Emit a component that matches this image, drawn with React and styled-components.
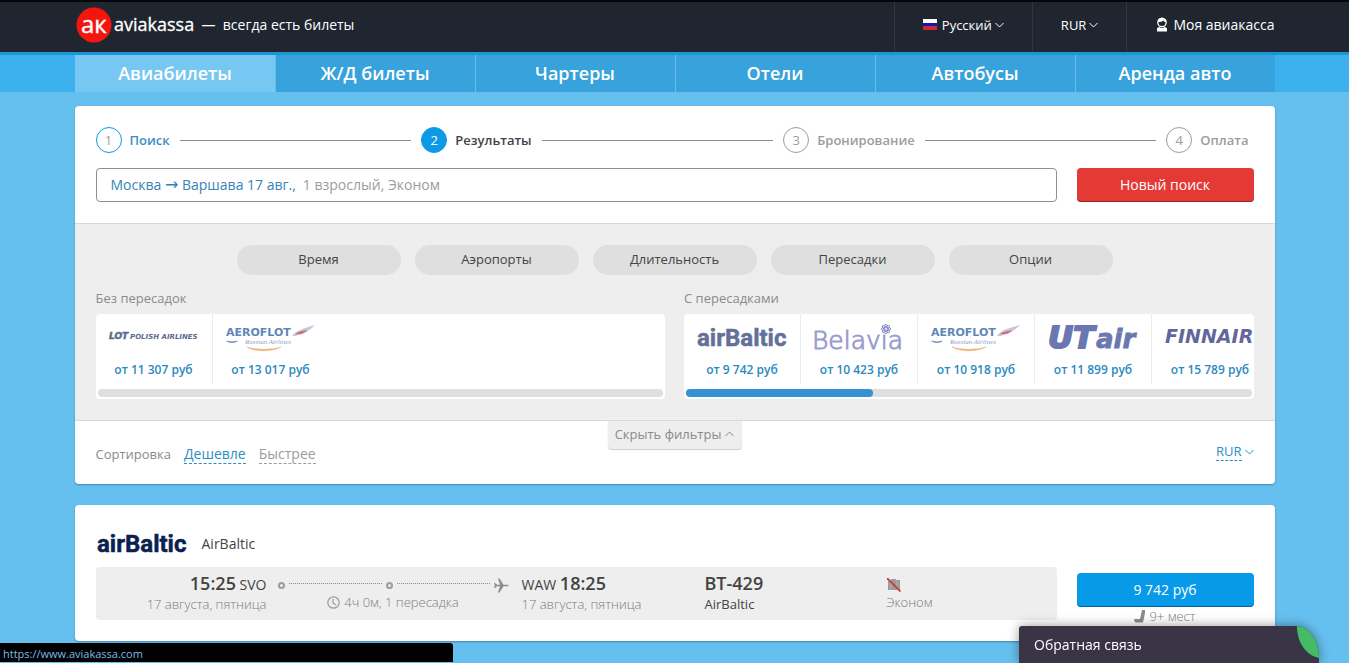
import { useState } from "react";
import styled, { createGlobalStyle } from "styled-components";

const GlobalStyle = createGlobalStyle`
  * {
    box-sizing: border-box;
  }

  body {
    margin: 0;
    background-color: #66c0ef;
    color: #434343;
    font-family: "Open Sans", "Noto Sans", sans-serif;
    font-size: 13px;
    line-height: 20px;
  }

  a {
    color: inherit;
    text-decoration: none;
  }

  button,
  select {
    margin: 0;
    padding: 0;
    border: none;
    background: none;
    color: inherit;
    font: inherit;
    cursor: pointer;
  }

  p,
  h2 {
    margin: 0;
  }

  svg {
    display: block;
    flex: none;
  }
`;

const Container = styled.div`
  display: flex;
  width: 100%;
  max-width: 1200px;
  margin: 0 auto;
`;

const TopBar = styled.header`
  border-top: 2px solid #06070d;
  border-bottom: 3px solid #1c96d5;
  background-color: #202630;
  color: #ffffff;
  font-size: 14px;
`;

const Brand = styled.a`
  display: flex;
  flex: 1;
  align-items: center;
  gap: 7px;
  height: 50px;
  padding-bottom: 4px;
`;

const HeaderCell = styled.div`
  display: flex;
  align-items: center;
  gap: 5px;
  height: 50px;
  padding: 0 28px 5px;
  border-left: 1px solid #303640;
`;

const AccountCell = styled(HeaderCell)`
  padding-right: 0;
  padding-left: 29px;
`;

const Picker = styled.label`
  display: flex;
  align-items: center;
  gap: 3px;
`;

const PlainSelect = styled.select`
  appearance: none;
  field-sizing: content;
  font-size: 13px;
  line-height: 20px;
`;

const Nav = styled.nav`
  background-color: #3db1ed;
`;

const NavTab = styled.a`
  flex: 1;
  height: 37px;
  border-left: 1px solid ${({ $active }) => ($active ? "#77c7f3" : "#68bfed")};
  background-color: ${({ $active }) => ($active ? "#77c7f3" : "#38a2dc")};
  color: #ffffff;
  font-size: 18px;
  font-weight: 600;
  line-height: 36px;
  text-align: center;
`;

const Main = styled.main`
  display: flex;
  flex-direction: column;
  gap: 21px;
  width: 100%;
  max-width: 1200px;
  margin: 0 auto;
  padding: 14px 0 20px;
`;

const Card = styled.section`
  border-radius: 4px;
  background-color: #ffffff;
  box-shadow: 0 1px 2px rgba(30, 80, 110, 0.5);
`;

const SearchHead = styled.div`
  display: flex;
  flex-direction: column;
  gap: 15px;
  padding: 21px;
  border-bottom: 1px solid #d9d9d9;
`;

const Steps = styled.div`
  display: flex;
  align-items: center;
  gap: 10px;
  padding-right: 5px;
`;

const STEP_COLORS = {
  done: "#3c8fc4",
  current: "#434343",
  next: "#9c9c9c",
};

const Step = styled.div`
  display: flex;
  align-items: center;
  gap: 8px;
  color: ${({ $state }) => STEP_COLORS[$state]};
  font-weight: 600;
`;

const StepNumber = styled.span`
  width: 26px;
  height: 26px;
  border: 1px solid
    ${({ $state }) => ($state === "next" ? "#9c9c9c" : "#0c9ae6")};
  border-radius: 50%;
  background-color: ${({ $state }) =>
    $state === "current" ? "#0c9ae6" : "#ffffff"};
  color: ${({ $state }) => ($state === "current" ? "#ffffff" : "#9c9c9c")};
  font-weight: 400;
  line-height: 24px;
  text-align: center;
`;

const StepLine = styled.span`
  flex: 1;
  height: 1px;
  background-color: #8c8c8c;
`;

const SideGrid = styled.div`
  display: grid;
  grid-template-columns: 1fr 177px;
  gap: 20px;
  align-items: start;
`;

const RouteField = styled.button`
  height: 34px;
  padding: 0 14px;
  border: 1px solid #8f8f8f;
  border-radius: 4px;
  color: #9c9c9c;
  font-size: 14px;
  text-align: left;
`;

const Route = styled.span`
  margin-right: 7px;
  color: #3584b5;
`;

const RouteArrow = styled.span`
  font-family: "DejaVu Sans", sans-serif;
  font-size: 16px;
  line-height: 16px;
`;

const SolidButton = styled.button`
  width: 100%;
  height: 34px;
  border-radius: 4px;
  background-color: ${({ $color }) => $color};
  box-shadow: inset 0 -1px 0 rgba(0, 0, 0, 0.35);
  color: #ffffff;
  font-size: 14px;
  font-weight: ${({ $weight }) => $weight || 400};
`;

const Filters = styled.div`
  display: flex;
  flex-direction: column;
  padding: 21px;
  border-bottom: 1px solid #d9d9d9;
  background-color: #eeeeee;
`;

const FilterPills = styled.div`
  display: flex;
  justify-content: center;
  gap: 14px;
`;

const Pill = styled.button`
  width: 164px;
  height: 30px;
  padding-bottom: 2px;
  border-radius: 15px;
  background-color: #dfdfdf;
  color: #444444;
  font-weight: 500;
`;

const AirlineGroups = styled.div`
  display: grid;
  grid-template-columns: minmax(0, 1fr) minmax(0, 1fr);
  gap: 19px;
  padding-top: 13px;
`;

const GroupTitle = styled.h2`
  padding-bottom: 6px;
  color: #8a8a8a;
  font-size: 13px;
  font-weight: 500;
  line-height: 20px;
`;

const AirlineBox = styled.div`
  overflow: hidden;
  border-radius: 4px;
  background-color: #ffffff;
`;

const AirlineRow = styled.div`
  display: flex;
  height: 70px;
  overflow: hidden;
`;

const AirlineCell = styled.a`
  display: flex;
  flex: none;
  flex-direction: column;
  align-items: center;
  width: 117px;
  border-right: 1px solid #ebebeb;
  color: #2a8ac0;
  font-size: 12px;
  font-weight: 600;
  line-height: 21px;

  &:last-child {
    border-right-color: transparent;
  }
`;

const Track = styled.div`
  height: 8px;
  margin: 5px 2px 2px;
  border-radius: 4px;
  background-color: #dfdfdf;
`;

const Thumb = styled.div`
  height: 8px;
  border-radius: 4px;
  background-color: #3792d4;
`;

const SortBar = styled.div`
  display: grid;
  grid-template-columns: 1fr 134px 1fr;
  min-height: 63px;
  padding: 0 21px;
`;

const SortOptions = styled.div`
  display: flex;
  align-items: center;
  gap: 13px;
  padding-top: 3px;
  color: #8a8a8a;
  font-weight: 500;
`;

const SortLink = styled.button`
  border-bottom: 1px dashed currentColor;
  color: ${({ $active }) => ($active ? "#2a8fc0" : "#9c9c9c")};
  font-size: 14px;
  font-weight: 400;
  line-height: 18px;
`;

const HideFilters = styled.button`
  display: flex;
  align-items: center;
  justify-content: center;
  gap: 4px;
  height: 28px;
  padding-bottom: 3px;
  border-radius: 0 0 4px 4px;
  background-color: #eeeeee;
  box-shadow: 0 1px 1px #cccccc;
  color: #8a8a8a;
  font-weight: 500;
`;

const CurrencyPicker = styled(Picker)`
  align-self: center;
  justify-self: end;
  padding-bottom: 2px;
  color: #2a8fc0;

  select {
    border-bottom: 1px dashed currentColor;
    line-height: 18px;
  }
`;

const TicketCard = styled(Card)`
  padding: 21px 21px 15px;
`;

const Carrier = styled.div`
  display: flex;
  align-items: center;
  gap: 14px;
  height: 41px;
  padding-bottom: 6px;
  font-size: 14px;
`;

const Segment = styled.div`
  display: grid;
  grid-template-columns: 171fr 255fr 183fr 182fr 170fr;
  height: 53px;
  padding: 6px 0;
  border-radius: 4px;
  background-color: #eeeeee;
`;

const SegmentPart = styled.div`
  text-align: ${({ $align }) => $align || "left"};
`;

const BigLine = styled.p`
  font-size: 14px;
  line-height: 20px;
  white-space: nowrap;

  strong {
    font-size: 18px;
    font-weight: 600;
  }
`;

const SmallLine = styled.p`
  display: flex;
  align-items: center;
  justify-content: ${({ $justify }) => $justify || "flex-start"};
  gap: 4px;
  color: ${({ $dark }) => ($dark ? "#434343" : "#7c7c7c")};
  font-weight: ${({ $dark }) => ($dark ? 400 : 300)};
  line-height: 19px;
  white-space: nowrap;
`;

const FlightPath = styled.div`
  padding: 0 13px 0 11px;
`;

const PathLine = styled.div`
  display: flex;
  align-items: center;
  gap: 4px;
  height: 20px;
  padding-top: 4px;
`;

const PathStop = styled.span`
  width: 7px;
  height: 7px;
  border: 2px solid #9c9c9c;
  border-radius: 50%;
`;

const PathDots = styled.span`
  flex: 1;
  height: 4px;
  border-top: 1px dotted #8c8c8c;
`;

const Offer = styled.div`
  padding-top: 6px;
`;

const StatusLine = styled.div`
  position: fixed;
  bottom: 1px;
  left: 0;
  width: 453px;
  max-width: 50%;
  height: 19px;
  padding-left: 3px;
  border-top-right-radius: 3px;
  background-color: #000000;
  color: #7cbbee;
  font-size: 11px;
  line-height: 22px;
`;

const Feedback = styled.button`
  position: fixed;
  right: 30px;
  bottom: 0;
  display: flex;
  justify-content: space-between;
  width: 300px;
  height: 37px;
  padding-left: 15px;
  overflow: hidden;
  border-radius: 3px 22px 0 0 / 3px 32px 0 0;
  background-color: #3a3447;
  box-shadow: 0 0 12px rgba(0, 0, 0, 0.4);
  color: #ffffff;
  font-size: 14px;
  line-height: 37px;
`;

const NAV_TABS = [
  "Авиабилеты",
  "Ж/Д билеты",
  "Чартеры",
  "Отели",
  "Автобусы",
  "Аренда авто",
];

const STEPS = [
  { title: "Поиск", state: "done" },
  { title: "Результаты", state: "current" },
  { title: "Бронирование", state: "next" },
  { title: "Оплата", state: "next" },
];

const FILTERS = ["Время", "Аэропорты", "Длительность", "Пересадки", "Опции"];

const Chevron = ({ up, color = "currentColor" }) => (
  <svg width="9" height="6" viewBox="0 0 9 6" fill="none" stroke={color}>
    <path d={up ? "M.5 5 4.5 1l4 4" : "M.5 1l4 4 4-4"} />
  </svg>
);

const Flag = () => (
  <svg width="14" height="11" viewBox="0 0 14 11">
    <path fill="#ffffff" d="M0 0h14v4H0z" />
    <path fill="#1713b4" d="M0 4h14v4H0z" />
    <path fill="#c92a34" d="M0 7h14v4H0z" />
  </svg>
);

const UserIcon = () => (
  <svg width="12" height="15" viewBox="0 0 12 15">
    <circle cx="6" cy="5.5" r="4.2" fill="none" stroke="#fff" strokeWidth="1.3" />
    <path d="M2 5c2 0 4.500-.4 5.500-1.600C8 4.500 9 5 10 5V2.500L6 .6 2.500 2z" fill="#fff" />
    <path d="M1 14.500v-2.500c0-1 1-1.800 2.400-2 1.500 1.200 3.700 1.200 5.200 0 1.400.2 2.400 1 2.400 2v2.500z" fill="#fff" />
  </svg>
);

const BrandLogo = () => (
  <svg width="120" height="36" viewBox="0 0 120 36" fill="#fff">
    <circle cx="19" cy="18" r="17.500" fill="#f5150f" />
    <text
      x="6"
      y="26"
      fontFamily="Open Sans"
      fontSize="24"
      fontWeight="500"
      stroke="#fff"
      strokeWidth=".4"
    >
      aк
    </text>
    <text
      x="39"
      y="24"
      fontFamily="Open Sans"
      fontSize="18"
      fontWeight="500"
      stroke="#fff"
      strokeWidth=".3"
    >
      aviakassa
    </text>
  </svg>
);

const AirBalticLogo = ({ color }) => (
  <svg width="92" height="28" viewBox="0 0 92 28">
    <text
      x="1"
      y="22"
      fill={color}
      stroke={color}
      strokeWidth=".5"
      fontFamily="Roboto"
      fontSize="24"
      fontWeight="700"
    >
      airBaltic
    </text>
  </svg>
);

const LotLogo = () => (
  <svg width="92" height="45" viewBox="0 0 92 45" fill="#5c6a90">
    <text
      x="1"
      y="25"
      fontFamily="DejaVu Sans"
      fontSize="9"
      fontWeight="700"
      fontStyle="italic"
      stroke="#5c6a90"
      strokeWidth=".5"
    >
      LOT
    </text>
    <text x="22" y="25" fontFamily="DejaVu Sans" fontSize="7" fontWeight="700" fontStyle="italic">
      POLISH AIRLINES
    </text>
  </svg>
);

const AeroflotLogo = () => (
  <svg width="92" height="45" viewBox="0 0 92 45">
    <text x="1" y="22" fill="#5f86b8" fontFamily="DejaVu Sans" fontSize="11" fontWeight="700">
      AEROFLOT
    </text>
    <text x="20" y="30" fill="#8ba3c6" fontFamily="Liberation Serif" fontSize="7" fontStyle="italic" fontWeight="400">
      Russian Airlines
    </text>
    <path d="M1 27c2-.6 4 .4 6 .4s4-1 6-.4c-2 1.500-4 2-6 2s-4-.5-6-2z" fill="#7f9cc4" />
    <path d="M67 22c4-6 13-8 23-11-5 5-10 9-17 10l-2 1z" fill="#c9c6d8" />
    <path d="M70 20c4-3 8-3 12-4-3 4-7 5-12 4z" fill="#cf6f7c" />
    <path d="M22 33c8 5 25 5 34 0-9 3-25 3-34 0z" fill="#ecb07a" stroke="#ecb07a" strokeWidth=".5" />
  </svg>
);

const PETALS = [0, 45, 90, 135, 180, 225, 270, 315];

const BelaviaLogo = () => (
  <svg width="94" height="45" viewBox="0 0 94 45">
    <text
      x="0"
      y="35"
      fill="#9c9dd0"
      stroke="#9c9dd0"
      strokeWidth="1"
      fontFamily="DejaVu Sans"
      fontSize="25"
      fontWeight="200"
    >
      Belavıa
    </text>
    <g fill="none" stroke="#8b8cc8" strokeWidth="1">
      <circle cx="74" cy="15" r="1.500" />
      {PETALS.map((angle) => (
        <circle
          key={angle}
          cx="74"
          cy="11.600"
          r="1.200"
          transform={`rotate(${angle} 74 15)`}
        />
      ))}
    </g>
  </svg>
);

const UtairLogo = () => (
  <svg width="92" height="45" viewBox="0 0 92 45">
    <g
      fill="#6b77b0"
      stroke="#6b77b0"
      fontFamily="DejaVu Sans"
      fontWeight="700"
      fontStyle="italic"
    >
      <text x="1" y="34" fontSize="31" strokeWidth="2">
        UT
      </text>
      <text x="49" y="34" fontSize="26" strokeWidth=".8">
        air
      </text>
    </g>
  </svg>
);

const FinnairLogo = () => (
  <svg width="92" height="45" viewBox="0 0 92 45">
    <text
      x="1"
      y="29"
      fill="#65659c"
      fontFamily="DejaVu Sans"
      fontSize="19"
      fontWeight="700"
      fontStyle="italic"
    >
      FINNAIR
    </text>
  </svg>
);

const AirBalticTile = () => (
  <svg width="92" height="45" viewBox="0 0 92 45">
    <svg y="10" width="92" height="28">
      <AirBalticLogo color="#64709a" />
    </svg>
  </svg>
);

const ClockIcon = () => (
  <svg width="13" height="13" viewBox="0 0 13 13" fill="none" stroke="#9c9c9c" strokeWidth="1.200">
    <circle cx="6.500" cy="6.500" r="5.700" />
    <path d="M6 3v4l3 2" />
  </svg>
);

const PlaneIcon = () => (
  <svg width="15" height="15" viewBox="0 0 15 15">
    <path
      d="M0 5h1l2 1.700h3L4 .500h1.500l4 6.200H13c1 0 1.700.3 1.700.8s-.7.8-1.700.8H9.500l-4 6.200H4l2-6.200H3L1 10H0l.8-2.500z"
      fill="#8c8c8c"
    />
  </svg>
);

const NoBaggageIcon = () => (
  <svg width="14" height="14" viewBox="0 0 14 14">
    <path d="M1 3h3V1h5v1h4v10H1z" fill="#9c9c9c" />
    <path d="M4 3v9M10 3v9" stroke="#b4b4b4" />
    <path d="M0 0l13.500 13.500" stroke="#c9383c" strokeWidth="1.800" />
  </svg>
);

const SeatIcon = () => (
  <svg width="11" height="13" viewBox="0 0 11 13">
    <path d="M8 0h3v3L9 12.500H1L0 9h6z" fill="#8c8c8c" />
  </svg>
);

const Leaf = () => (
  <svg width="22" height="32" viewBox="0 0 22 32">
    <path d="M0 0h22v32C9 29 0 17 0 0z" fill="#45bb66" />
  </svg>
);

const DIRECT = [
  { name: "LOT", price: "11 307", logo: <LotLogo /> },
  { name: "Aeroflot", price: "13 017", logo: <AeroflotLogo /> },
];

const WITH_STOPS = [
  { name: "airBaltic", price: "9 742", logo: <AirBalticTile /> },
  { name: "Belavia", price: "10 423", logo: <BelaviaLogo /> },
  { name: "Aeroflot", price: "10 918", logo: <AeroflotLogo /> },
  { name: "UTair", price: "11 899", logo: <UtairLogo /> },
  { name: "Finnair", price: "15 789", logo: <FinnairLogo /> },
];

const AirlineGroup = ({ title, airlines, progress }) => (
  <div>
    <GroupTitle>{title}</GroupTitle>
    <AirlineBox>
      <AirlineRow>
        {airlines.map(({ name, price, logo }) => (
          <AirlineCell key={name} href="#">
            {logo}
            <span>от {price} руб</span>
          </AirlineCell>
        ))}
      </AirlineRow>
      <Track>
        {progress ? <Thumb style={{ width: `${progress}%` }} /> : null}
      </Track>
    </AirlineBox>
  </div>
);

const Header = () => (
  <TopBar>
    <Container>
      <Brand href="#">
        <BrandLogo />
        <span>—&nbsp; всегда есть билеты</span>
      </Brand>
      <HeaderCell>
        <Flag />
        <Picker>
          <PlainSelect aria-label="Язык">
            <option>Русский</option>
          </PlainSelect>
          <Chevron />
        </Picker>
      </HeaderCell>
      <HeaderCell>
        <Picker>
          <PlainSelect aria-label="Валюта">
            <option>RUR</option>
          </PlainSelect>
          <Chevron />
        </Picker>
      </HeaderCell>
      <AccountCell>
        <UserIcon />
        <a href="#">Моя авиакасса</a>
      </AccountCell>
    </Container>
  </TopBar>
);

const SearchCard = () => {
  const [sort, setSort] = useState("Дешевле");

  return (
    <Card>
      <SearchHead>
        <Steps>
          {STEPS.flatMap(({ title, state }, index) => [
            index > 0 && <StepLine key={`line-${title}`} />,
            <Step key={title} $state={state}>
              <StepNumber $state={state}>{index + 1}</StepNumber>
              {title}
            </Step>,
          ])}
        </Steps>
        <SideGrid>
          <RouteField>
            <Route>
              Москва <RouteArrow>→</RouteArrow> Варшава 17 авг.,
            </Route>
            1 взрослый, Эконом
          </RouteField>
          <SolidButton $color="#e53935">Новый поиск</SolidButton>
        </SideGrid>
      </SearchHead>
      <Filters>
        <FilterPills>
          {FILTERS.map((filter) => (
            <Pill key={filter}>{filter}</Pill>
          ))}
        </FilterPills>
        <AirlineGroups>
          <AirlineGroup title="Без пересадок" airlines={DIRECT} />
          <AirlineGroup
            title="С пересадками"
            airlines={WITH_STOPS}
            progress={33}
          />
        </AirlineGroups>
      </Filters>
      <SortBar>
        <SortOptions>
          Сортировка
          {["Дешевле", "Быстрее"].map((option) => (
            <SortLink
              key={option}
              $active={sort === option}
              onClick={() => setSort(option)}
            >
              {option}
            </SortLink>
          ))}
        </SortOptions>
        <HideFilters>
          Скрыть фильтры
          <Chevron up />
        </HideFilters>
        <CurrencyPicker>
          <PlainSelect aria-label="Валюта цен">
            <option>RUR</option>
          </PlainSelect>
          <Chevron />
        </CurrencyPicker>
      </SortBar>
    </Card>
  );
};

const Ticket = () => (
  <TicketCard>
    <Carrier>
      <AirBalticLogo color="#0b1f50" />
      AirBaltic
    </Carrier>
    <SideGrid>
      <Segment>
        <SegmentPart $align="right">
          <BigLine>
            <strong>15:25</strong> SVO
          </BigLine>
          <SmallLine $justify="flex-end">17 августа, пятница</SmallLine>
        </SegmentPart>
        <FlightPath>
          <PathLine>
            <PathStop />
            <PathDots />
            <PathStop />
            <PathDots />
            <PlaneIcon />
          </PathLine>
          <SmallLine $justify="center">
            <ClockIcon />
            4ч 0м, 1 пересадка
          </SmallLine>
        </FlightPath>
        <SegmentPart>
          <BigLine>
            WAW <strong>18:25</strong>
          </BigLine>
          <SmallLine>17 августа, пятница</SmallLine>
        </SegmentPart>
        <SegmentPart>
          <BigLine>
            <strong>BT-429</strong>
          </BigLine>
          <SmallLine $dark>AirBaltic</SmallLine>
        </SegmentPart>
        <SegmentPart>
          <PathLine>
            <NoBaggageIcon />
          </PathLine>
          <SmallLine>Эконом</SmallLine>
        </SegmentPart>
      </Segment>
      <Offer>
        <SolidButton $color="#069ae8" $weight={500}>
          9 742 руб
        </SolidButton>
        <SmallLine $justify="center">
          <SeatIcon />
          9+ мест
        </SmallLine>
      </Offer>
    </SideGrid>
  </TicketCard>
);

const App = () => (
  <>
    <GlobalStyle />
    <Header />
    <Nav>
      <Container>
        {NAV_TABS.map((tab, index) => (
          <NavTab key={tab} href="#" $active={index === 0}>
            {tab}
          </NavTab>
        ))}
      </Container>
    </Nav>
    <Main>
      <SearchCard />
      <Ticket />
    </Main>
    <StatusLine>https://www.aviakassa.com</StatusLine>
    <Feedback>
      Обратная связь
      <Leaf />
    </Feedback>
  </>
);

export default App;
